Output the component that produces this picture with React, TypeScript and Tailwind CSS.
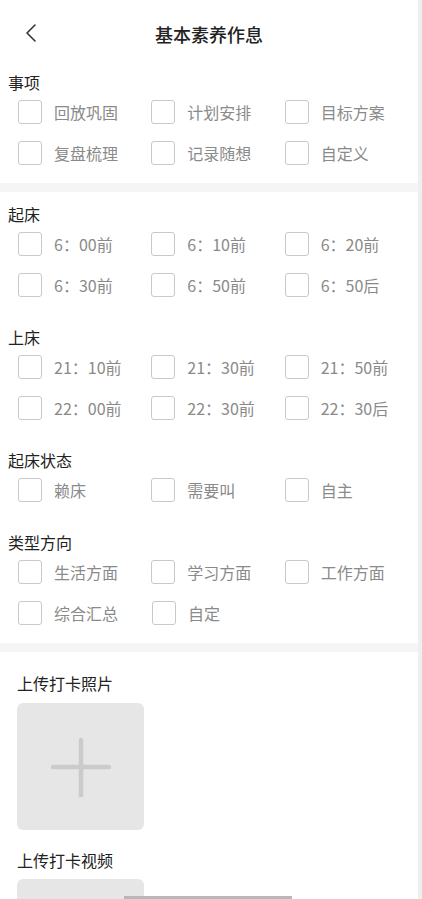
import React from "react";

const font = { fontFamily: '"Noto Sans CJK SC", "Noto Sans", sans-serif' };

function Check({ label, w }: { label: string; w: string }) {
  return (
    <div className={`flex items-center h-[24px] ${w}`}>
      <div className="w-[24px] h-[24px] border border-[#c9c9c9] rounded-[3px] bg-white shrink-0" />
      <span className="ml-[12px] text-[16px] leading-[22px] text-[#8a8a8a] whitespace-nowrap">{label}</span>
    </div>
  );
}

function Group({ title, rows, w, first }: { title: string; rows: string[][]; w: string; first?: boolean }) {
  return (
    <div className={first ? "" : "mt-[29px]"}>
      <div className="pl-[8px] h-[22px] text-[16px] leading-[22px] text-[#222]">{title}</div>
      <div className="mt-[7px] flex flex-col gap-[17px] pl-[18px]">
        {rows.map((r, i) => (
          <div key={i} className="flex">
            {r.map((l) => (
              <Check key={l} label={l} w={w} />
            ))}
          </div>
        ))}
      </div>
    </div>
  );
}

function UploadBox() {
  return (
    <div className="w-[127px] h-[127px] rounded-[6px] bg-[#e6e6e6] flex items-center justify-center">
      <svg width="60" height="60" viewBox="0 0 60 60">
        <path d="M30 3 V59 M2 30 H58" stroke="#cbcbcb" strokeWidth="4.5" strokeLinecap="round" fill="none" />
      </svg>
    </div>
  );
}

export default function App() {
  return (
    <div className="relative w-[422px] h-[899px] overflow-hidden bg-white flex items-start" style={font}>
      <div className="w-[418px] shrink-0">
        <div className="relative h-[67px] flex items-center justify-center">
          <svg className="absolute left-[24px] top-[23px]" width="14" height="20" viewBox="0 0 14 20">
            <path d="M11 2 L3 10 L11 18" stroke="#333" strokeWidth="1.6" fill="none" strokeLinecap="round" strokeLinejoin="round" />
          </svg>
          <span className="text-[18px] leading-[24px] text-[#222] font-medium">基本素养作息</span>
        </div>
        <div className="mt-[4px] pb-[18px]">
          <Group
            first
            title="事项"
            w="w-[137px]"
            rows={[
              ["回放巩固", "计划安排", "目标方案"],
              ["复盘梳理", "记录随想", "自定义"],
            ]}
          />
        </div>
        <div className="h-[9px] bg-[#f5f5f5]" />
        <div className="pt-[11px] pb-[18px]">
          <Group
            first
            title="起床"
            w="w-[134px]"
            rows={[
              ["6：00前", "6：10前", "6：20前"],
              ["6：30前", "6：50前", "6：50后"],
            ]}
          />
          <Group
            title="上床"
            w="w-[134px]"
            rows={[
              ["21：10前", "21：30前", "21：50前"],
              ["22：00前", "22：30前", "22：30后"],
            ]}
          />
          <Group title="起床状态" w="w-[134px]" rows={[["赖床", "需要叫", "自主"]]} />
          <Group
            title="类型方向"
            w="w-[134px]"
            rows={[
              ["生活方面", "学习方面", "工作方面"],
              ["综合汇总", "自定"],
            ]}
          />
        </div>
        <div className="h-[9px] bg-[#f5f5f5]" />
        <div className="pl-[17px] pt-[20px]">
          <div className="h-[22px] text-[16px] leading-[22px] text-[#222]">上传打卡照片</div>
          <div className="mt-[9px]">
            <UploadBox />
          </div>
          <div className="mt-[19px] h-[22px] text-[16px] leading-[22px] text-[#222]">上传打卡视频</div>
          <div className="mt-[8px]">
            <UploadBox />
          </div>
        </div>
      </div>
      <div className="w-[4px] h-[899px] bg-[#efefef] shrink-0" />
      <div className="absolute left-[124px] top-[896px] w-[168px] h-[3px] bg-[#b8b8b8]" />
    </div>
  );
}
